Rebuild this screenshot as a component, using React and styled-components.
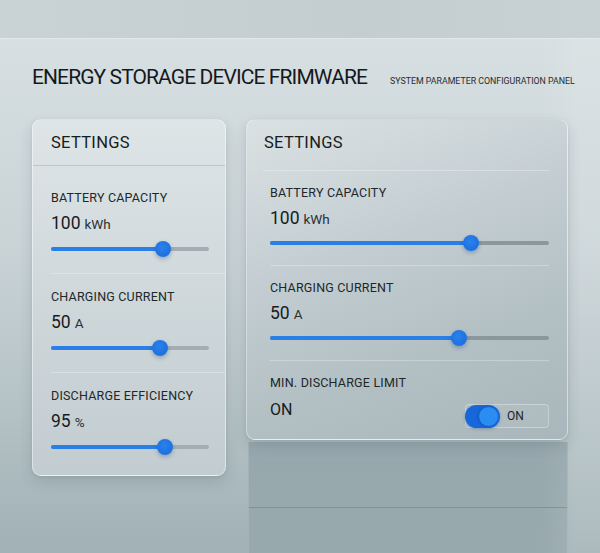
import React from 'react';
import styled, { createGlobalStyle } from 'styled-components';

const GlobalStyle = createGlobalStyle`
  * { box-sizing: border-box; }
  html, body { margin: 0; padding: 0; }
  body {
    font-family: Roboto, "Liberation Sans", sans-serif;
    color: #1b2126;
    background: #a6b6bb;
  }
`;

const leftItems = [
  { label: 'BATTERY CAPACITY', value: '100', unit: 'kWh', pct: 70.6 },
  { label: 'CHARGING CURRENT', value: '50', unit: 'A', pct: 68.8 },
  { label: 'DISCHARGE EFFICIENCY', value: '95', unit: '%', pct: 72 },
];

const rightItems = [
  { label: 'BATTERY CAPACITY', value: '100', unit: 'kWh', pct: 72 },
  { label: 'CHARGING CURRENT', value: '50', unit: 'A', pct: 67.6 },
];

const Page = styled.div`
  width: 600px;
  height: 553px;
  overflow: hidden;
  display: flex;
  flex-direction: column;
  background: linear-gradient(180deg, #d9e1e3 0%, #c9d3d6 45%, #b0bec2 80%, #a1b1b6 100%);
`;

const TopBand = styled.div`
  height: 39px;
  flex-shrink: 0;
  background: linear-gradient(90deg, #c9d2d4, #c4cdd0 60%, #c8d1d3);
  border-bottom: 1px solid #e3e9ea;
`;

const Main = styled.div`
  flex: 1;
  display: flex;
  flex-direction: column;
  padding: 26px 0 0 32px;
  background: linear-gradient(90deg, rgba(255, 255, 255, 0) 90%, rgba(255, 255, 255, 0.12) 96%);
`;

const Header = styled.header`
  display: flex;
  align-items: baseline;
  gap: 23px;
  height: 54px;
`;

const Title = styled.h1`
  margin: 0;
  font-size: 21px;
  font-weight: 400;
  letter-spacing: -0.9px;
  color: #15191c;
`;

const Subtitle = styled.span`
  font-size: 8.8px;
  color: #262d31;
`;

const Columns = styled.div`
  flex: 1;
  display: flex;
  gap: 20px;
  align-items: flex-start;
`;

const RightColumn = styled.div`
  display: flex;
  flex-direction: column;
  align-self: stretch;
`;

const Card = styled.section`
  width: ${(p) => p.$width}px;
  border-radius: 9px;
  border: 1px solid rgba(255, 255, 255, 0.45);
  background: ${(p) =>
    p.$dark
      ? 'linear-gradient(160deg, #dae1e3 0%, #c3cdd1 40%, #b2bfc3 70%, #a9b6bb 100%)'
      : 'linear-gradient(180deg, #dee5e7 0%, #cdd6d9 55%, #c3cdd1 100%)'};
  box-shadow: 0 6px 14px rgba(40, 60, 70, 0.14), 0 1px 3px rgba(40, 60, 70, 0.08);
`;

const CardHeader = styled.div`
  padding: ${(p) => (p.$dark ? '13px 17px 16px' : '13px 18px 12px')};
  font-size: 16.5px;
  line-height: 20px;
  letter-spacing: 0.3px;
  color: #171c20;
  border-bottom: 1px solid ${(p) => (p.$dark ? 'transparent' : 'rgba(130, 150, 158, 0.35)')};
`;

const HeaderRule = styled.div`
  height: 1px;
  margin: 0 18px 0 16px;
  background: rgba(255, 255, 255, 0.3);
`;

const Item = styled.div`
  padding: ${(p) => p.$pad};
  border-bottom: 1px solid ${(p) => (p.$last ? 'transparent' : 'rgba(255, 255, 255, 0.28)')};
  margin: ${(p) => p.$margin};
`;

const Label = styled.div`
  font-size: 12.5px;
  line-height: 16px;
  letter-spacing: 0.2px;
  color: #20272b;
`;

const Value = styled.div`
  margin-top: 6px;
  height: 22px;
  line-height: 22px;
  font-size: 17.5px;
  color: #171b1e;
  span {
    font-size: 13.5px;
    margin-left: 4px;
    color: #2a3034;
  }
`;

const Track = styled.div`
  position: relative;
  height: 14px;
  margin-top: ${(p) => p.$gap}px;
  &::before {
    content: '';
    position: absolute;
    left: 0;
    right: 0;
    top: 5px;
    height: 4px;
    border-radius: 2px;
    background: ${(p) => (p.$dark ? '#8b979c' : '#a3aeb2')};
  }
`;

const Fill = styled.div`
  position: absolute;
  left: 0;
  top: 5px;
  height: 4px;
  border-radius: 2px;
  background: #2a7fe6;
`;

const Thumb = styled.div`
  position: absolute;
  top: -1px;
  width: 16px;
  height: 16px;
  margin-left: -8px;
  border-radius: 50%;
  background: radial-gradient(circle at 45% 40%, #2a82ec, #1868d8);
  box-shadow: 0 2px 4px rgba(10, 50, 110, 0.3);
`;

const Slider = ({ pct, gap, dark }) => (
  <Track $gap={gap} $dark={dark}>
    <Fill style={{ width: `${pct}%` }} />
    <Thumb style={{ left: `${pct}%` }} />
  </Track>
);

const ToggleRow = styled.div`
  display: flex;
  justify-content: space-between;
  align-items: flex-start;
  margin-top: 8px;
`;

const StateText = styled.div`
  font-size: 16px;
  line-height: 22px;
  color: #171b1e;
`;

const ToggleBox = styled.div`
  display: flex;
  align-items: center;
  width: 84px;
  height: 24px;
  margin-top: 5px;
  border: 1px solid rgba(255, 255, 255, 0.3);
  border-radius: 4px;
  background: rgba(255, 255, 255, 0.06);
  font-size: 12px;
  color: #1d2327;
  gap: 7px;
`;

const Switch = styled.div`
  position: relative;
  width: 35px;
  height: 23px;
  margin-left: -1px;
  border-radius: 12px;
  background: #1767db;
  box-shadow: 0 1px 3px rgba(10, 60, 130, 0.3);
  &::after {
    content: '';
    position: absolute;
    right: 2px;
    top: 2px;
    width: 19px;
    height: 19px;
    border-radius: 50%;
    background: #2b8cf2;
    box-shadow: -1px 0 3px rgba(10, 50, 120, 0.35);
  }
`;

const Ghost = styled.div`
  flex: 1;
  margin: 2px 0 0 2px;
  display: flex;
  flex-direction: column;
  background: linear-gradient(180deg, rgba(70, 95, 105, 0.24), rgba(70, 95, 105, 0.1));
  border-left: 1px solid rgba(255, 255, 255, 0.12);
  border-right: 1px solid rgba(255, 255, 255, 0.12);
`;

const GhostTop = styled.div`
  height: 66px;
  border-bottom: 1px solid rgba(80, 100, 110, 0.35);
`;

const App = () => (
  <>
    <GlobalStyle />
    <Page>
      <TopBand />
      <Main>
        <Header>
          <Title>ENERGY STORAGE DEVICE FRIMWARE</Title>
          <Subtitle>SYSTEM PARAMETER CONFIGURATION PANEL</Subtitle>
        </Header>
        <Columns>
          <Card $width={194}>
            <CardHeader>SETTINGS</CardHeader>
            {leftItems.map((it, i) => (
              <Item
                key={it.label}
                $last={i === leftItems.length - 1}
                $pad={`${i === 0 ? 24 : 15}px 16px ${i === leftItems.length - 1 ? 20 : 17}px 0`}
                $margin="0 0 0 18px"
              >
                <Label>{it.label}</Label>
                <Value>
                  {it.value}
                  <span>{it.unit}</span>
                </Value>
                <Slider pct={it.pct} gap={8} />
              </Item>
            ))}
          </Card>
          <RightColumn>
            <Card $width={322} $dark>
              <CardHeader $dark>SETTINGS</CardHeader>
              <HeaderRule />
              {rightItems.map((it) => (
                <Item key={it.label} $pad="14px 0 15px" $margin="0 18px 0 23px">
                  <Label>{it.label}</Label>
                  <Value>
                    {it.value}
                    <span>{it.unit}</span>
                  </Value>
                  <Slider pct={it.pct} gap={7} dark />
                </Item>
              ))}
              <Item $last $pad="14px 0 10px" $margin="0 18px 0 23px">
                <Label>MIN. DISCHARGE LIMIT</Label>
                <ToggleRow>
                  <StateText>ON</StateText>
                  <ToggleBox>
                    <Switch />
                    ON
                  </ToggleBox>
                </ToggleRow>
              </Item>
            </Card>
            <Ghost>
              <GhostTop />
            </Ghost>
          </RightColumn>
        </Columns>
      </Main>
    </Page>
  </>
);

export default App;
